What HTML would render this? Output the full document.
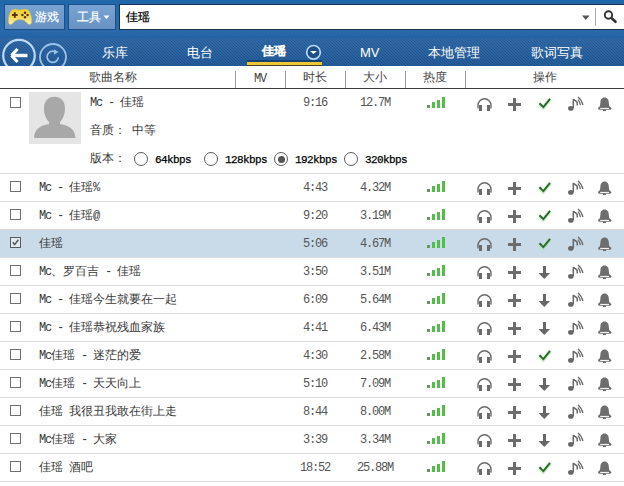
<!DOCTYPE html>
<html><head><meta charset="utf-8">
<style>
*{margin:0;padding:0;box-sizing:border-box}
html,body{width:624px;height:486px;overflow:hidden;background:#fff;font-family:"Liberation Sans",sans-serif;font-size:12px;color:#333}
.abs{position:absolute}
#top{position:absolute;left:0;top:0;width:624px;height:38px;background:linear-gradient(#2068aa,#2a6aac)}
#nav{position:absolute;left:0;top:38px;width:624px;height:28px;background-color:#27619e;
 background-image:repeating-linear-gradient(45deg,rgba(255,255,255,0.06) 0 1px,transparent 1px 3px),repeating-linear-gradient(-45deg,rgba(0,0,0,0.06) 0 1px,transparent 1px 3px)}
.btn{position:absolute;top:4px;height:26px;background:linear-gradient(#78a3d2,#6892c3);border:1px solid #1b4f88}
.navt{position:absolute;top:45px;color:#fff;font-size:13px;line-height:16px;white-space:nowrap}
#hdr{position:absolute;left:0;top:66px;width:624px;height:23px;background:#fff;border-bottom:1px solid #3a3a3a}
.hs{position:absolute;top:71px;width:1px;height:17px;background:#999}
.ht{position:absolute;top:69px;font-size:12px;color:#444;line-height:16px;white-space:nowrap}
.row{position:absolute;left:0;width:624px;height:28px;border-top:1px solid #dcdcdc}
.row.sel{background:#c9dae8}
.cb{position:absolute;left:10px;width:11px;height:11px;border:1px solid #707070;background:#fff}
.cb svg{position:absolute;left:0;top:0}
.m{font-family:"Liberation Mono",monospace;font-size:12px;letter-spacing:-1.2px}
.t{position:absolute;line-height:14px;color:#383838;white-space:nowrap}
.c{text-align:center}
.kb{color:#000;font-size:11px;letter-spacing:-0.6px;margin-top:2px;-webkit-text-stroke:0.25px #000}
.ic{position:absolute;left:0;width:624px;height:28px}
.ic svg{position:absolute}
.radio{position:absolute;width:14px;height:14px;border:1px solid #5c5c5c;border-radius:50%;background:#fff}
.radio.sel::after{content:"";position:absolute;left:2.5px;top:2.5px;width:7px;height:7px;border-radius:50%;background:#555}
#band{position:absolute;left:0;top:30px;width:624px;height:8px;background:linear-gradient(#2a6aac,#2566a8 60%,#2261a3)}
.n{color:#555;margin-top:1px}
.cb.on{background:#e2eaf2;border-color:#5a5a5a}

</style></head><body>
<div id="top"></div>
<div id="band"></div>
<div class="btn" style="left:4px;width:61px"></div>
<div class="btn" style="left:68px;width:48px"></div>
<svg class="abs" style="left:7px;top:8px" width="26" height="18">
 <defs><linearGradient id="gy" x1="0" y1="0" x2="0" y2="1"><stop offset="0" stop-color="#f2cf2a"/><stop offset="0.55" stop-color="#f4dc5a"/><stop offset="1" stop-color="#f8f0b0"/></linearGradient></defs>
 <path d="M6,1.5 C9,0.5 11,2 13,2 C15,2 17,0.5 20,1.5 C23.5,3 25,10 24.5,14.5 C24,17 21.5,17 19.5,14.5 C18,12.5 16.5,11.5 13,11.5 C9.5,11.5 8,12.5 6.5,14.5 C4.5,17 2,17 1.5,14.5 C1,10 2.5,3 6,1.5 Z" fill="url(#gy)" stroke="#d8c050" stroke-width="0.6"/>
 <path d="M5,7 H10.6 M7.8,4.2 V9.8" stroke="#5e3008" stroke-width="1.9"/>
 <circle cx="18" cy="4.8" r="1.2" fill="#5e3008"/><circle cx="20.6" cy="7" r="1.2" fill="#5e3008"/><circle cx="18" cy="9.2" r="1.2" fill="#5e3008"/><circle cx="15.4" cy="7" r="1.2" fill="#5e3008"/>
</svg>
<svg class="abs" style="left:103px;top:15px" width="7" height="5"><path d="M0.5,0.5 H6.5 L3.5,4 Z" fill="#fff"/></svg>
<div class="abs" style="left:119px;top:4px;width:505px;height:26px;background:#fff;border:1px solid #17324e;border-right:none"></div>
<svg class="abs" style="left:582px;top:15px" width="8" height="6"><path d="M0,0.5 H7.5 L3.75,5 Z" fill="#555"/></svg>
<div class="abs" style="left:595px;top:8px;width:1px;height:18px;background:#aaa"></div>
<svg class="abs" style="left:601px;top:8px" width="18" height="18"><circle cx="7.5" cy="7" r="3.7" fill="none" stroke="#333" stroke-width="1.9"/><path d="M10.5,10 L14.5,13.8" stroke="#333" stroke-width="2.6" stroke-linecap="round"/></svg>
<div class="t" style="left:126px;top:9px;font-size:12px;color:#000;line-height:16px;-webkit-text-stroke:0.25px #000">佳瑶</div>
<div class="t" style="left:35px;top:9px;font-size:12px;color:#fff;line-height:16px;-webkit-text-stroke:0.2px #fff">游戏</div>
<div class="t" style="left:77px;top:9px;font-size:12px;color:#fff;line-height:16px;-webkit-text-stroke:0.2px #fff">工具</div>
<svg class="abs" style="left:0;top:38px" width="624" height="28"><defs><pattern id="st" width="3" height="3" patternUnits="userSpaceOnUse"><rect width="3" height="3" fill="#2763a2"/><rect x="0" y="0" width="1" height="1" fill="#1c5390"/><rect x="1" y="1" width="1" height="1" fill="#1c5390"/><rect x="2" y="2" width="1" height="1" fill="#1c5390"/></pattern><linearGradient id="ng" x1="0" y1="0" x2="0" y2="1"><stop offset="0" stop-color="#fff" stop-opacity="0.05"/><stop offset="1" stop-color="#000" stop-opacity="0.05"/></linearGradient></defs><rect width="624" height="28" fill="url(#st)"/><rect width="624" height="28" fill="url(#ng)"/></svg>
<svg class="abs" style="left:0;top:38px" width="70" height="28">
 <circle cx="19" cy="17.6" r="15.8" fill="none" stroke="#bcd9f6" stroke-width="2.2"/>
 <path d="M11.5,17.5 L17.5,11 M11.5,17.5 L17.5,24" stroke="#fff" stroke-width="3.2" stroke-linecap="butt"/>
 <path d="M12.5,17.5 H27.5" stroke="#fff" stroke-width="3.4"/>
 <circle cx="53" cy="19" r="13" fill="none" stroke="#9cc0e6" stroke-width="1.8"/>
 <path d="M54.8,13.6 A5.6,5.6 0 1 0 58.3,19.2" fill="none" stroke="#9cc0e6" stroke-width="1.7"/>
 <path d="M54,11.2 L54,16.8 L58.5,14 Z" fill="#9cc0e6"/>
</svg>
<div class="navt" style="left:102px">乐库</div>
<div class="navt" style="left:187px">电台</div>
<div class="navt" style="left:262px;top:43px;font-size:12px;-webkit-text-stroke:0.8px #fff">佳瑶</div>
<div class="abs" style="left:247px;top:60px;width:75px;height:2px;background:rgba(0,20,50,0.35)"></div><div class="abs" style="left:247px;top:62px;width:75px;height:3px;background:#eec834"></div><div class="abs" style="left:247px;top:65px;width:75px;height:1px;background:#4a4520"></div>
<svg class="abs" style="left:304px;top:43px" width="19" height="19"><circle cx="9.5" cy="9.3" r="6.8" fill="#1d4f85" stroke="#b8d8f8" stroke-width="1.7"/><path d="M6,8 H13 L9.5,11 Z" fill="#fff"/></svg>
<div class="navt" style="left:360px">MV</div>
<div class="navt" style="left:428px">本地管理</div>
<div class="navt" style="left:531px">歌词写真</div>
<div id="hdr"></div>
<div class="hs" style="left:235px"></div>
<div class="hs" style="left:285px"></div>
<div class="hs" style="left:345px"></div>
<div class="hs" style="left:405px"></div>
<div class="hs" style="left:465px"></div>
<div class="ht" style="left:89px">歌曲名称</div>
<div class="ht m" style="left:254px;top:71px">MV</div>
<div class="ht" style="left:303px">时长</div>
<div class="ht" style="left:363px">大小</div>
<div class="ht" style="left:423px">热度</div>
<div class="ht" style="left:533px">操作</div>

<div class="cb" style="top:97px"></div>
<svg style="position:absolute;left:29px;top:92px" width="52" height="52"><rect width="52" height="52" fill="#e5e5e5"/><path d="M25.5,4.8 C31.5,4.8 36,9 36,16 C36,22.5 34,27 31,30 V32 C40,33.5 46,37 46.5,46 H5 C5.5,37 11,33.5 20,32 V30 C17,27 15,22.5 15,16 C15,9 19.5,4.8 25.5,4.8 Z" fill="#a8a8a8"/></svg>
<div class="t" style="left:90px;top:95px"><span class="m">Mc&#160;-&#160;</span>佳瑶</div>
<div class="t m c n" style="left:285px;width:60px;top:95px">9:16</div>
<div class="t m c n" style="left:345px;width:60px;top:95px">12.7M</div>
<div class="ic" style="top:89px"><svg style="left:427px;top:0" width="18" height="28"><rect x="0" y="16" width="3" height="3" fill="#629a5e"/><rect x="5" y="13" width="3" height="6" fill="#52bd4a"/><rect x="10" y="11" width="3" height="8" fill="#52bd4a"/><rect x="15" y="8" width="3" height="11" fill="#52bd4a"/></svg></div><div class="ic" style="top:89px"><svg style="left:476px;top:0" width="18" height="28"><path d="M2,19.5 V16.3 A6.5,6.5 0 0 1 15,16.3 V19.5" fill="none" stroke="#6a6a6a" stroke-width="1.4"/><rect x="3" y="16" width="3" height="6" fill="#6a6a6a"/><rect x="11" y="16" width="3" height="6" fill="#6a6a6a"/></svg></div><div class="ic" style="top:89px"><svg style="left:507px;top:0" width="16" height="28"><rect x="1" y="14" width="13" height="3" fill="#6c6c6c"/><rect x="6" y="9" width="3" height="13" fill="#6c6c6c"/></svg></div><div class="ic" style="top:89px"><svg style="left:537px;top:0" width="16" height="28"><path d="M2.2,14.8 L6.2,18.8 L12.8,10.4" fill="none" stroke="#a6e6a0" stroke-width="4" stroke-opacity="0.55"/><path d="M2.4,14.2 L6.4,18.1 L13.1,9.8" fill="none" stroke="#2f6a2f" stroke-width="2"/></svg></div><div class="ic" style="top:89px"><svg style="left:566px;top:0" width="20" height="28"><ellipse cx="4.8" cy="19.4" rx="2.7" ry="2.4" fill="#666"/><path d="M7.3,19.5 V9.9" fill="none" stroke="#666" stroke-width="1.5"/><path d="M7.4,10.4 Q10,12 11.2,13.2 L11.3,16.5" fill="none" stroke="#666" stroke-width="1.5"/><path d="M11.9,10.6 Q14,12.8 14.4,16.1" fill="none" stroke="#6a6a6a" stroke-width="1.25"/><path d="M12,7.9 Q15.9,11 16.9,16.1" fill="none" stroke="#6a6a6a" stroke-width="1.25"/></svg></div><div class="ic" style="top:89px"><svg style="left:597px;top:0" width="16" height="28"><path d="M7.6,8.6 C4.6,8.6 3.6,11 3.4,13.5 C3.2,16 3,17 2,18.5 H13.2 C12.2,17 12,16 11.8,13.5 C11.6,11 10.6,8.6 7.6,8.6 Z" fill="#6e6e6e"/><rect x="1.1" y="17.8" width="13.1" height="3" rx="1.5" fill="#6e6e6e"/><rect x="3.2" y="18.9" width="8.8" height="1" fill="#fff"/><rect x="6" y="20.5" width="3" height="1.6" fill="#6e6e6e"/></svg></div>
<div class="t" style="left:90px;top:123px">音质：<span class="m">&#160;</span>中等</div>
<div class="t" style="left:90px;top:151px">版本：</div>
<div class="radio" style="left:134px;top:152px"></div>
<div class="t m kb" style="left:155px;top:151px">64kbps</div>
<div class="radio" style="left:204px;top:152px"></div>
<div class="t m kb" style="left:225px;top:151px">128kbps</div>
<div class="radio sel" style="left:274px;top:152px"></div>
<div class="t m kb" style="left:295px;top:151px">192kbps</div>
<div class="radio" style="left:344px;top:152px"></div>
<div class="t m kb" style="left:365px;top:151px">320kbps</div>
<div class="row" style="top:173px"></div>
<div class="cb" style="top:181px"></div>
<div class="t" style="left:39px;top:180px"><span class="m">Mc&#160;-&#160;</span>佳瑶<span class="m">%</span></div>
<div class="t m c n" style="left:285px;width:60px;top:180px">4:43</div>
<div class="t m c n" style="left:345px;width:60px;top:180px">4.32M</div>
<div class="ic" style="top:173px"><svg style="left:427px;top:0" width="18" height="28"><rect x="0" y="16" width="3" height="3" fill="#629a5e"/><rect x="5" y="13" width="3" height="6" fill="#52bd4a"/><rect x="10" y="11" width="3" height="8" fill="#52bd4a"/><rect x="15" y="8" width="3" height="11" fill="#52bd4a"/></svg></div><div class="ic" style="top:173px"><svg style="left:476px;top:0" width="18" height="28"><path d="M2,19.5 V16.3 A6.5,6.5 0 0 1 15,16.3 V19.5" fill="none" stroke="#6a6a6a" stroke-width="1.4"/><rect x="3" y="16" width="3" height="6" fill="#6a6a6a"/><rect x="11" y="16" width="3" height="6" fill="#6a6a6a"/></svg></div><div class="ic" style="top:173px"><svg style="left:507px;top:0" width="16" height="28"><rect x="1" y="14" width="13" height="3" fill="#6c6c6c"/><rect x="6" y="9" width="3" height="13" fill="#6c6c6c"/></svg></div><div class="ic" style="top:173px"><svg style="left:537px;top:0" width="16" height="28"><path d="M2.2,14.8 L6.2,18.8 L12.8,10.4" fill="none" stroke="#a6e6a0" stroke-width="4" stroke-opacity="0.55"/><path d="M2.4,14.2 L6.4,18.1 L13.1,9.8" fill="none" stroke="#2f6a2f" stroke-width="2"/></svg></div><div class="ic" style="top:173px"><svg style="left:566px;top:0" width="20" height="28"><ellipse cx="4.8" cy="19.4" rx="2.7" ry="2.4" fill="#666"/><path d="M7.3,19.5 V9.9" fill="none" stroke="#666" stroke-width="1.5"/><path d="M7.4,10.4 Q10,12 11.2,13.2 L11.3,16.5" fill="none" stroke="#666" stroke-width="1.5"/><path d="M11.9,10.6 Q14,12.8 14.4,16.1" fill="none" stroke="#6a6a6a" stroke-width="1.25"/><path d="M12,7.9 Q15.9,11 16.9,16.1" fill="none" stroke="#6a6a6a" stroke-width="1.25"/></svg></div><div class="ic" style="top:173px"><svg style="left:597px;top:0" width="16" height="28"><path d="M7.6,8.6 C4.6,8.6 3.6,11 3.4,13.5 C3.2,16 3,17 2,18.5 H13.2 C12.2,17 12,16 11.8,13.5 C11.6,11 10.6,8.6 7.6,8.6 Z" fill="#6e6e6e"/><rect x="1.1" y="17.8" width="13.1" height="3" rx="1.5" fill="#6e6e6e"/><rect x="3.2" y="18.9" width="8.8" height="1" fill="#fff"/><rect x="6" y="20.5" width="3" height="1.6" fill="#6e6e6e"/></svg></div>
<div class="row" style="top:201px"></div>
<div class="cb" style="top:209px"></div>
<div class="t" style="left:39px;top:208px"><span class="m">Mc&#160;-&#160;</span>佳瑶<span class="m">@</span></div>
<div class="t m c n" style="left:285px;width:60px;top:208px">9:20</div>
<div class="t m c n" style="left:345px;width:60px;top:208px">3.19M</div>
<div class="ic" style="top:201px"><svg style="left:427px;top:0" width="18" height="28"><rect x="0" y="16" width="3" height="3" fill="#629a5e"/><rect x="5" y="13" width="3" height="6" fill="#52bd4a"/><rect x="10" y="11" width="3" height="8" fill="#52bd4a"/><rect x="15" y="8" width="3" height="11" fill="#52bd4a"/></svg></div><div class="ic" style="top:201px"><svg style="left:476px;top:0" width="18" height="28"><path d="M2,19.5 V16.3 A6.5,6.5 0 0 1 15,16.3 V19.5" fill="none" stroke="#6a6a6a" stroke-width="1.4"/><rect x="3" y="16" width="3" height="6" fill="#6a6a6a"/><rect x="11" y="16" width="3" height="6" fill="#6a6a6a"/></svg></div><div class="ic" style="top:201px"><svg style="left:507px;top:0" width="16" height="28"><rect x="1" y="14" width="13" height="3" fill="#6c6c6c"/><rect x="6" y="9" width="3" height="13" fill="#6c6c6c"/></svg></div><div class="ic" style="top:201px"><svg style="left:537px;top:0" width="16" height="28"><path d="M2.2,14.8 L6.2,18.8 L12.8,10.4" fill="none" stroke="#a6e6a0" stroke-width="4" stroke-opacity="0.55"/><path d="M2.4,14.2 L6.4,18.1 L13.1,9.8" fill="none" stroke="#2f6a2f" stroke-width="2"/></svg></div><div class="ic" style="top:201px"><svg style="left:566px;top:0" width="20" height="28"><ellipse cx="4.8" cy="19.4" rx="2.7" ry="2.4" fill="#666"/><path d="M7.3,19.5 V9.9" fill="none" stroke="#666" stroke-width="1.5"/><path d="M7.4,10.4 Q10,12 11.2,13.2 L11.3,16.5" fill="none" stroke="#666" stroke-width="1.5"/><path d="M11.9,10.6 Q14,12.8 14.4,16.1" fill="none" stroke="#6a6a6a" stroke-width="1.25"/><path d="M12,7.9 Q15.9,11 16.9,16.1" fill="none" stroke="#6a6a6a" stroke-width="1.25"/></svg></div><div class="ic" style="top:201px"><svg style="left:597px;top:0" width="16" height="28"><path d="M7.6,8.6 C4.6,8.6 3.6,11 3.4,13.5 C3.2,16 3,17 2,18.5 H13.2 C12.2,17 12,16 11.8,13.5 C11.6,11 10.6,8.6 7.6,8.6 Z" fill="#6e6e6e"/><rect x="1.1" y="17.8" width="13.1" height="3" rx="1.5" fill="#6e6e6e"/><rect x="3.2" y="18.9" width="8.8" height="1" fill="#fff"/><rect x="6" y="20.5" width="3" height="1.6" fill="#6e6e6e"/></svg></div>
<div class="row sel" style="top:229px"></div>
<div class="cb on" style="top:237px"><svg width="9" height="9"><path d="M1.8,4.3 L3.6,6.6 L7.4,1.8" fill="none" stroke="#555" stroke-width="1.5"/></svg></div>
<div class="t" style="left:39px;top:236px">佳瑶</div>
<div class="t m c n" style="left:285px;width:60px;top:236px">5:06</div>
<div class="t m c n" style="left:345px;width:60px;top:236px">4.67M</div>
<div class="ic" style="top:229px"><svg style="left:427px;top:0" width="18" height="28"><rect x="0" y="16" width="3" height="3" fill="#629a5e"/><rect x="5" y="13" width="3" height="6" fill="#52bd4a"/><rect x="10" y="11" width="3" height="8" fill="#52bd4a"/><rect x="15" y="8" width="3" height="11" fill="#52bd4a"/></svg></div><div class="ic" style="top:229px"><svg style="left:476px;top:0" width="18" height="28"><path d="M2,19.5 V16.3 A6.5,6.5 0 0 1 15,16.3 V19.5" fill="none" stroke="#6a6a6a" stroke-width="1.4"/><rect x="3" y="16" width="3" height="6" fill="#6a6a6a"/><rect x="11" y="16" width="3" height="6" fill="#6a6a6a"/></svg></div><div class="ic" style="top:229px"><svg style="left:507px;top:0" width="16" height="28"><rect x="1" y="14" width="13" height="3" fill="#6c6c6c"/><rect x="6" y="9" width="3" height="13" fill="#6c6c6c"/></svg></div><div class="ic" style="top:229px"><svg style="left:537px;top:0" width="16" height="28"><path d="M2.2,14.8 L6.2,18.8 L12.8,10.4" fill="none" stroke="#a6e6a0" stroke-width="4" stroke-opacity="0.55"/><path d="M2.4,14.2 L6.4,18.1 L13.1,9.8" fill="none" stroke="#2f6a2f" stroke-width="2"/></svg></div><div class="ic" style="top:229px"><svg style="left:566px;top:0" width="20" height="28"><ellipse cx="4.8" cy="19.4" rx="2.7" ry="2.4" fill="#666"/><path d="M7.3,19.5 V9.9" fill="none" stroke="#666" stroke-width="1.5"/><path d="M7.4,10.4 Q10,12 11.2,13.2 L11.3,16.5" fill="none" stroke="#666" stroke-width="1.5"/><path d="M11.9,10.6 Q14,12.8 14.4,16.1" fill="none" stroke="#6a6a6a" stroke-width="1.25"/><path d="M12,7.9 Q15.9,11 16.9,16.1" fill="none" stroke="#6a6a6a" stroke-width="1.25"/></svg></div><div class="ic" style="top:229px"><svg style="left:597px;top:0" width="16" height="28"><path d="M7.6,8.6 C4.6,8.6 3.6,11 3.4,13.5 C3.2,16 3,17 2,18.5 H13.2 C12.2,17 12,16 11.8,13.5 C11.6,11 10.6,8.6 7.6,8.6 Z" fill="#6e6e6e"/><rect x="1.1" y="17.8" width="13.1" height="3" rx="1.5" fill="#6e6e6e"/><rect x="3.2" y="18.9" width="8.8" height="1" fill="#fff"/><rect x="6" y="20.5" width="3" height="1.6" fill="#6e6e6e"/></svg></div>
<div class="row" style="top:257px"></div>
<div class="cb" style="top:265px"></div>
<div class="t" style="left:39px;top:264px"><span class="m">Mc</span>、罗百吉<span class="m">&#160;-&#160;</span>佳瑶</div>
<div class="t m c n" style="left:285px;width:60px;top:264px">3:50</div>
<div class="t m c n" style="left:345px;width:60px;top:264px">3.51M</div>
<div class="ic" style="top:257px"><svg style="left:427px;top:0" width="18" height="28"><rect x="0" y="16" width="3" height="3" fill="#629a5e"/><rect x="5" y="13" width="3" height="6" fill="#52bd4a"/><rect x="10" y="11" width="3" height="8" fill="#52bd4a"/><rect x="15" y="8" width="3" height="11" fill="#52bd4a"/></svg></div><div class="ic" style="top:257px"><svg style="left:476px;top:0" width="18" height="28"><path d="M2,19.5 V16.3 A6.5,6.5 0 0 1 15,16.3 V19.5" fill="none" stroke="#6a6a6a" stroke-width="1.4"/><rect x="3" y="16" width="3" height="6" fill="#6a6a6a"/><rect x="11" y="16" width="3" height="6" fill="#6a6a6a"/></svg></div><div class="ic" style="top:257px"><svg style="left:507px;top:0" width="16" height="28"><rect x="1" y="14" width="13" height="3" fill="#6c6c6c"/><rect x="6" y="9" width="3" height="13" fill="#6c6c6c"/></svg></div><div class="ic" style="top:257px"><svg style="left:538px;top:0" width="14" height="28"><rect x="5" y="9" width="3" height="8" fill="#666"/><path d="M0.5,16 H12 L6.3,22 Z" fill="#666"/></svg></div><div class="ic" style="top:257px"><svg style="left:566px;top:0" width="20" height="28"><ellipse cx="4.8" cy="19.4" rx="2.7" ry="2.4" fill="#666"/><path d="M7.3,19.5 V9.9" fill="none" stroke="#666" stroke-width="1.5"/><path d="M7.4,10.4 Q10,12 11.2,13.2 L11.3,16.5" fill="none" stroke="#666" stroke-width="1.5"/><path d="M11.9,10.6 Q14,12.8 14.4,16.1" fill="none" stroke="#6a6a6a" stroke-width="1.25"/><path d="M12,7.9 Q15.9,11 16.9,16.1" fill="none" stroke="#6a6a6a" stroke-width="1.25"/></svg></div><div class="ic" style="top:257px"><svg style="left:597px;top:0" width="16" height="28"><path d="M7.6,8.6 C4.6,8.6 3.6,11 3.4,13.5 C3.2,16 3,17 2,18.5 H13.2 C12.2,17 12,16 11.8,13.5 C11.6,11 10.6,8.6 7.6,8.6 Z" fill="#6e6e6e"/><rect x="1.1" y="17.8" width="13.1" height="3" rx="1.5" fill="#6e6e6e"/><rect x="3.2" y="18.9" width="8.8" height="1" fill="#fff"/><rect x="6" y="20.5" width="3" height="1.6" fill="#6e6e6e"/></svg></div>
<div class="row" style="top:285px"></div>
<div class="cb" style="top:293px"></div>
<div class="t" style="left:39px;top:292px"><span class="m">Mc&#160;-&#160;</span>佳瑶今生就要在一起</div>
<div class="t m c n" style="left:285px;width:60px;top:292px">6:09</div>
<div class="t m c n" style="left:345px;width:60px;top:292px">5.64M</div>
<div class="ic" style="top:285px"><svg style="left:427px;top:0" width="18" height="28"><rect x="0" y="16" width="3" height="3" fill="#629a5e"/><rect x="5" y="13" width="3" height="6" fill="#52bd4a"/><rect x="10" y="11" width="3" height="8" fill="#52bd4a"/><rect x="15" y="8" width="3" height="11" fill="#52bd4a"/></svg></div><div class="ic" style="top:285px"><svg style="left:476px;top:0" width="18" height="28"><path d="M2,19.5 V16.3 A6.5,6.5 0 0 1 15,16.3 V19.5" fill="none" stroke="#6a6a6a" stroke-width="1.4"/><rect x="3" y="16" width="3" height="6" fill="#6a6a6a"/><rect x="11" y="16" width="3" height="6" fill="#6a6a6a"/></svg></div><div class="ic" style="top:285px"><svg style="left:507px;top:0" width="16" height="28"><rect x="1" y="14" width="13" height="3" fill="#6c6c6c"/><rect x="6" y="9" width="3" height="13" fill="#6c6c6c"/></svg></div><div class="ic" style="top:285px"><svg style="left:538px;top:0" width="14" height="28"><rect x="5" y="9" width="3" height="8" fill="#666"/><path d="M0.5,16 H12 L6.3,22 Z" fill="#666"/></svg></div><div class="ic" style="top:285px"><svg style="left:566px;top:0" width="20" height="28"><ellipse cx="4.8" cy="19.4" rx="2.7" ry="2.4" fill="#666"/><path d="M7.3,19.5 V9.9" fill="none" stroke="#666" stroke-width="1.5"/><path d="M7.4,10.4 Q10,12 11.2,13.2 L11.3,16.5" fill="none" stroke="#666" stroke-width="1.5"/><path d="M11.9,10.6 Q14,12.8 14.4,16.1" fill="none" stroke="#6a6a6a" stroke-width="1.25"/><path d="M12,7.9 Q15.9,11 16.9,16.1" fill="none" stroke="#6a6a6a" stroke-width="1.25"/></svg></div><div class="ic" style="top:285px"><svg style="left:597px;top:0" width="16" height="28"><path d="M7.6,8.6 C4.6,8.6 3.6,11 3.4,13.5 C3.2,16 3,17 2,18.5 H13.2 C12.2,17 12,16 11.8,13.5 C11.6,11 10.6,8.6 7.6,8.6 Z" fill="#6e6e6e"/><rect x="1.1" y="17.8" width="13.1" height="3" rx="1.5" fill="#6e6e6e"/><rect x="3.2" y="18.9" width="8.8" height="1" fill="#fff"/><rect x="6" y="20.5" width="3" height="1.6" fill="#6e6e6e"/></svg></div>
<div class="row" style="top:313px"></div>
<div class="cb" style="top:321px"></div>
<div class="t" style="left:39px;top:320px"><span class="m">Mc&#160;-&#160;</span>佳瑶恭祝残血家族</div>
<div class="t m c n" style="left:285px;width:60px;top:320px">4:41</div>
<div class="t m c n" style="left:345px;width:60px;top:320px">6.43M</div>
<div class="ic" style="top:313px"><svg style="left:427px;top:0" width="18" height="28"><rect x="0" y="16" width="3" height="3" fill="#629a5e"/><rect x="5" y="13" width="3" height="6" fill="#52bd4a"/><rect x="10" y="11" width="3" height="8" fill="#52bd4a"/><rect x="15" y="8" width="3" height="11" fill="#52bd4a"/></svg></div><div class="ic" style="top:313px"><svg style="left:476px;top:0" width="18" height="28"><path d="M2,19.5 V16.3 A6.5,6.5 0 0 1 15,16.3 V19.5" fill="none" stroke="#6a6a6a" stroke-width="1.4"/><rect x="3" y="16" width="3" height="6" fill="#6a6a6a"/><rect x="11" y="16" width="3" height="6" fill="#6a6a6a"/></svg></div><div class="ic" style="top:313px"><svg style="left:507px;top:0" width="16" height="28"><rect x="1" y="14" width="13" height="3" fill="#6c6c6c"/><rect x="6" y="9" width="3" height="13" fill="#6c6c6c"/></svg></div><div class="ic" style="top:313px"><svg style="left:538px;top:0" width="14" height="28"><rect x="5" y="9" width="3" height="8" fill="#666"/><path d="M0.5,16 H12 L6.3,22 Z" fill="#666"/></svg></div><div class="ic" style="top:313px"><svg style="left:566px;top:0" width="20" height="28"><ellipse cx="4.8" cy="19.4" rx="2.7" ry="2.4" fill="#666"/><path d="M7.3,19.5 V9.9" fill="none" stroke="#666" stroke-width="1.5"/><path d="M7.4,10.4 Q10,12 11.2,13.2 L11.3,16.5" fill="none" stroke="#666" stroke-width="1.5"/><path d="M11.9,10.6 Q14,12.8 14.4,16.1" fill="none" stroke="#6a6a6a" stroke-width="1.25"/><path d="M12,7.9 Q15.9,11 16.9,16.1" fill="none" stroke="#6a6a6a" stroke-width="1.25"/></svg></div><div class="ic" style="top:313px"><svg style="left:597px;top:0" width="16" height="28"><path d="M7.6,8.6 C4.6,8.6 3.6,11 3.4,13.5 C3.2,16 3,17 2,18.5 H13.2 C12.2,17 12,16 11.8,13.5 C11.6,11 10.6,8.6 7.6,8.6 Z" fill="#6e6e6e"/><rect x="1.1" y="17.8" width="13.1" height="3" rx="1.5" fill="#6e6e6e"/><rect x="3.2" y="18.9" width="8.8" height="1" fill="#fff"/><rect x="6" y="20.5" width="3" height="1.6" fill="#6e6e6e"/></svg></div>
<div class="row" style="top:341px"></div>
<div class="cb" style="top:349px"></div>
<div class="t" style="left:39px;top:348px"><span class="m">Mc</span>佳瑶<span class="m">&#160;-&#160;</span>迷茫的爱</div>
<div class="t m c n" style="left:285px;width:60px;top:348px">4:30</div>
<div class="t m c n" style="left:345px;width:60px;top:348px">2.58M</div>
<div class="ic" style="top:341px"><svg style="left:427px;top:0" width="18" height="28"><rect x="0" y="16" width="3" height="3" fill="#629a5e"/><rect x="5" y="13" width="3" height="6" fill="#52bd4a"/><rect x="10" y="11" width="3" height="8" fill="#52bd4a"/><rect x="15" y="8" width="3" height="11" fill="#52bd4a"/></svg></div><div class="ic" style="top:341px"><svg style="left:476px;top:0" width="18" height="28"><path d="M2,19.5 V16.3 A6.5,6.5 0 0 1 15,16.3 V19.5" fill="none" stroke="#6a6a6a" stroke-width="1.4"/><rect x="3" y="16" width="3" height="6" fill="#6a6a6a"/><rect x="11" y="16" width="3" height="6" fill="#6a6a6a"/></svg></div><div class="ic" style="top:341px"><svg style="left:507px;top:0" width="16" height="28"><rect x="1" y="14" width="13" height="3" fill="#6c6c6c"/><rect x="6" y="9" width="3" height="13" fill="#6c6c6c"/></svg></div><div class="ic" style="top:341px"><svg style="left:537px;top:0" width="16" height="28"><path d="M2.2,14.8 L6.2,18.8 L12.8,10.4" fill="none" stroke="#a6e6a0" stroke-width="4" stroke-opacity="0.55"/><path d="M2.4,14.2 L6.4,18.1 L13.1,9.8" fill="none" stroke="#2f6a2f" stroke-width="2"/></svg></div><div class="ic" style="top:341px"><svg style="left:566px;top:0" width="20" height="28"><ellipse cx="4.8" cy="19.4" rx="2.7" ry="2.4" fill="#666"/><path d="M7.3,19.5 V9.9" fill="none" stroke="#666" stroke-width="1.5"/><path d="M7.4,10.4 Q10,12 11.2,13.2 L11.3,16.5" fill="none" stroke="#666" stroke-width="1.5"/><path d="M11.9,10.6 Q14,12.8 14.4,16.1" fill="none" stroke="#6a6a6a" stroke-width="1.25"/><path d="M12,7.9 Q15.9,11 16.9,16.1" fill="none" stroke="#6a6a6a" stroke-width="1.25"/></svg></div><div class="ic" style="top:341px"><svg style="left:597px;top:0" width="16" height="28"><path d="M7.6,8.6 C4.6,8.6 3.6,11 3.4,13.5 C3.2,16 3,17 2,18.5 H13.2 C12.2,17 12,16 11.8,13.5 C11.6,11 10.6,8.6 7.6,8.6 Z" fill="#6e6e6e"/><rect x="1.1" y="17.8" width="13.1" height="3" rx="1.5" fill="#6e6e6e"/><rect x="3.2" y="18.9" width="8.8" height="1" fill="#fff"/><rect x="6" y="20.5" width="3" height="1.6" fill="#6e6e6e"/></svg></div>
<div class="row" style="top:369px"></div>
<div class="cb" style="top:377px"></div>
<div class="t" style="left:39px;top:376px"><span class="m">Mc</span>佳瑶<span class="m">&#160;-&#160;</span>天天向上</div>
<div class="t m c n" style="left:285px;width:60px;top:376px">5:10</div>
<div class="t m c n" style="left:345px;width:60px;top:376px">7.09M</div>
<div class="ic" style="top:369px"><svg style="left:427px;top:0" width="18" height="28"><rect x="0" y="16" width="3" height="3" fill="#629a5e"/><rect x="5" y="13" width="3" height="6" fill="#52bd4a"/><rect x="10" y="11" width="3" height="8" fill="#52bd4a"/><rect x="15" y="8" width="3" height="11" fill="#52bd4a"/></svg></div><div class="ic" style="top:369px"><svg style="left:476px;top:0" width="18" height="28"><path d="M2,19.5 V16.3 A6.5,6.5 0 0 1 15,16.3 V19.5" fill="none" stroke="#6a6a6a" stroke-width="1.4"/><rect x="3" y="16" width="3" height="6" fill="#6a6a6a"/><rect x="11" y="16" width="3" height="6" fill="#6a6a6a"/></svg></div><div class="ic" style="top:369px"><svg style="left:507px;top:0" width="16" height="28"><rect x="1" y="14" width="13" height="3" fill="#6c6c6c"/><rect x="6" y="9" width="3" height="13" fill="#6c6c6c"/></svg></div><div class="ic" style="top:369px"><svg style="left:538px;top:0" width="14" height="28"><rect x="5" y="9" width="3" height="8" fill="#666"/><path d="M0.5,16 H12 L6.3,22 Z" fill="#666"/></svg></div><div class="ic" style="top:369px"><svg style="left:566px;top:0" width="20" height="28"><ellipse cx="4.8" cy="19.4" rx="2.7" ry="2.4" fill="#666"/><path d="M7.3,19.5 V9.9" fill="none" stroke="#666" stroke-width="1.5"/><path d="M7.4,10.4 Q10,12 11.2,13.2 L11.3,16.5" fill="none" stroke="#666" stroke-width="1.5"/><path d="M11.9,10.6 Q14,12.8 14.4,16.1" fill="none" stroke="#6a6a6a" stroke-width="1.25"/><path d="M12,7.9 Q15.9,11 16.9,16.1" fill="none" stroke="#6a6a6a" stroke-width="1.25"/></svg></div><div class="ic" style="top:369px"><svg style="left:597px;top:0" width="16" height="28"><path d="M7.6,8.6 C4.6,8.6 3.6,11 3.4,13.5 C3.2,16 3,17 2,18.5 H13.2 C12.2,17 12,16 11.8,13.5 C11.6,11 10.6,8.6 7.6,8.6 Z" fill="#6e6e6e"/><rect x="1.1" y="17.8" width="13.1" height="3" rx="1.5" fill="#6e6e6e"/><rect x="3.2" y="18.9" width="8.8" height="1" fill="#fff"/><rect x="6" y="20.5" width="3" height="1.6" fill="#6e6e6e"/></svg></div>
<div class="row" style="top:397px"></div>
<div class="cb" style="top:405px"></div>
<div class="t" style="left:39px;top:404px">佳瑶<span class="m">&#160;</span>我很丑我敢在街上走</div>
<div class="t m c n" style="left:285px;width:60px;top:404px">8:44</div>
<div class="t m c n" style="left:345px;width:60px;top:404px">8.00M</div>
<div class="ic" style="top:397px"><svg style="left:427px;top:0" width="18" height="28"><rect x="0" y="16" width="3" height="3" fill="#629a5e"/><rect x="5" y="13" width="3" height="6" fill="#52bd4a"/><rect x="10" y="11" width="3" height="8" fill="#52bd4a"/><rect x="15" y="8" width="3" height="11" fill="#52bd4a"/></svg></div><div class="ic" style="top:397px"><svg style="left:476px;top:0" width="18" height="28"><path d="M2,19.5 V16.3 A6.5,6.5 0 0 1 15,16.3 V19.5" fill="none" stroke="#6a6a6a" stroke-width="1.4"/><rect x="3" y="16" width="3" height="6" fill="#6a6a6a"/><rect x="11" y="16" width="3" height="6" fill="#6a6a6a"/></svg></div><div class="ic" style="top:397px"><svg style="left:507px;top:0" width="16" height="28"><rect x="1" y="14" width="13" height="3" fill="#6c6c6c"/><rect x="6" y="9" width="3" height="13" fill="#6c6c6c"/></svg></div><div class="ic" style="top:397px"><svg style="left:538px;top:0" width="14" height="28"><rect x="5" y="9" width="3" height="8" fill="#666"/><path d="M0.5,16 H12 L6.3,22 Z" fill="#666"/></svg></div><div class="ic" style="top:397px"><svg style="left:566px;top:0" width="20" height="28"><ellipse cx="4.8" cy="19.4" rx="2.7" ry="2.4" fill="#666"/><path d="M7.3,19.5 V9.9" fill="none" stroke="#666" stroke-width="1.5"/><path d="M7.4,10.4 Q10,12 11.2,13.2 L11.3,16.5" fill="none" stroke="#666" stroke-width="1.5"/><path d="M11.9,10.6 Q14,12.8 14.4,16.1" fill="none" stroke="#6a6a6a" stroke-width="1.25"/><path d="M12,7.9 Q15.9,11 16.9,16.1" fill="none" stroke="#6a6a6a" stroke-width="1.25"/></svg></div><div class="ic" style="top:397px"><svg style="left:597px;top:0" width="16" height="28"><path d="M7.6,8.6 C4.6,8.6 3.6,11 3.4,13.5 C3.2,16 3,17 2,18.5 H13.2 C12.2,17 12,16 11.8,13.5 C11.6,11 10.6,8.6 7.6,8.6 Z" fill="#6e6e6e"/><rect x="1.1" y="17.8" width="13.1" height="3" rx="1.5" fill="#6e6e6e"/><rect x="3.2" y="18.9" width="8.8" height="1" fill="#fff"/><rect x="6" y="20.5" width="3" height="1.6" fill="#6e6e6e"/></svg></div>
<div class="row" style="top:425px"></div>
<div class="cb" style="top:433px"></div>
<div class="t" style="left:39px;top:432px"><span class="m">Mc</span>佳瑶<span class="m">&#160;-&#160;</span>大家</div>
<div class="t m c n" style="left:285px;width:60px;top:432px">3:39</div>
<div class="t m c n" style="left:345px;width:60px;top:432px">3.34M</div>
<div class="ic" style="top:425px"><svg style="left:427px;top:0" width="18" height="28"><rect x="0" y="16" width="3" height="3" fill="#629a5e"/><rect x="5" y="13" width="3" height="6" fill="#52bd4a"/><rect x="10" y="11" width="3" height="8" fill="#52bd4a"/><rect x="15" y="8" width="3" height="11" fill="#52bd4a"/></svg></div><div class="ic" style="top:425px"><svg style="left:476px;top:0" width="18" height="28"><path d="M2,19.5 V16.3 A6.5,6.5 0 0 1 15,16.3 V19.5" fill="none" stroke="#6a6a6a" stroke-width="1.4"/><rect x="3" y="16" width="3" height="6" fill="#6a6a6a"/><rect x="11" y="16" width="3" height="6" fill="#6a6a6a"/></svg></div><div class="ic" style="top:425px"><svg style="left:507px;top:0" width="16" height="28"><rect x="1" y="14" width="13" height="3" fill="#6c6c6c"/><rect x="6" y="9" width="3" height="13" fill="#6c6c6c"/></svg></div><div class="ic" style="top:425px"><svg style="left:538px;top:0" width="14" height="28"><rect x="5" y="9" width="3" height="8" fill="#666"/><path d="M0.5,16 H12 L6.3,22 Z" fill="#666"/></svg></div><div class="ic" style="top:425px"><svg style="left:566px;top:0" width="20" height="28"><ellipse cx="4.8" cy="19.4" rx="2.7" ry="2.4" fill="#666"/><path d="M7.3,19.5 V9.9" fill="none" stroke="#666" stroke-width="1.5"/><path d="M7.4,10.4 Q10,12 11.2,13.2 L11.3,16.5" fill="none" stroke="#666" stroke-width="1.5"/><path d="M11.9,10.6 Q14,12.8 14.4,16.1" fill="none" stroke="#6a6a6a" stroke-width="1.25"/><path d="M12,7.9 Q15.9,11 16.9,16.1" fill="none" stroke="#6a6a6a" stroke-width="1.25"/></svg></div><div class="ic" style="top:425px"><svg style="left:597px;top:0" width="16" height="28"><path d="M7.6,8.6 C4.6,8.6 3.6,11 3.4,13.5 C3.2,16 3,17 2,18.5 H13.2 C12.2,17 12,16 11.8,13.5 C11.6,11 10.6,8.6 7.6,8.6 Z" fill="#6e6e6e"/><rect x="1.1" y="17.8" width="13.1" height="3" rx="1.5" fill="#6e6e6e"/><rect x="3.2" y="18.9" width="8.8" height="1" fill="#fff"/><rect x="6" y="20.5" width="3" height="1.6" fill="#6e6e6e"/></svg></div>
<div class="row" style="top:453px"></div>
<div class="cb" style="top:461px"></div>
<div class="t" style="left:39px;top:460px">佳瑶<span class="m">&#160;</span>酒吧</div>
<div class="t m c n" style="left:285px;width:60px;top:460px">18:52</div>
<div class="t m c n" style="left:345px;width:60px;top:460px">25.88M</div>
<div class="ic" style="top:453px"><svg style="left:427px;top:0" width="18" height="28"><rect x="0" y="16" width="3" height="3" fill="#629a5e"/><rect x="5" y="13" width="3" height="6" fill="#52bd4a"/><rect x="10" y="11" width="3" height="8" fill="#52bd4a"/><rect x="15" y="8" width="3" height="11" fill="#52bd4a"/></svg></div><div class="ic" style="top:453px"><svg style="left:476px;top:0" width="18" height="28"><path d="M2,19.5 V16.3 A6.5,6.5 0 0 1 15,16.3 V19.5" fill="none" stroke="#6a6a6a" stroke-width="1.4"/><rect x="3" y="16" width="3" height="6" fill="#6a6a6a"/><rect x="11" y="16" width="3" height="6" fill="#6a6a6a"/></svg></div><div class="ic" style="top:453px"><svg style="left:507px;top:0" width="16" height="28"><rect x="1" y="14" width="13" height="3" fill="#6c6c6c"/><rect x="6" y="9" width="3" height="13" fill="#6c6c6c"/></svg></div><div class="ic" style="top:453px"><svg style="left:537px;top:0" width="16" height="28"><path d="M2.2,14.8 L6.2,18.8 L12.8,10.4" fill="none" stroke="#a6e6a0" stroke-width="4" stroke-opacity="0.55"/><path d="M2.4,14.2 L6.4,18.1 L13.1,9.8" fill="none" stroke="#2f6a2f" stroke-width="2"/></svg></div><div class="ic" style="top:453px"><svg style="left:566px;top:0" width="20" height="28"><ellipse cx="4.8" cy="19.4" rx="2.7" ry="2.4" fill="#666"/><path d="M7.3,19.5 V9.9" fill="none" stroke="#666" stroke-width="1.5"/><path d="M7.4,10.4 Q10,12 11.2,13.2 L11.3,16.5" fill="none" stroke="#666" stroke-width="1.5"/><path d="M11.9,10.6 Q14,12.8 14.4,16.1" fill="none" stroke="#6a6a6a" stroke-width="1.25"/><path d="M12,7.9 Q15.9,11 16.9,16.1" fill="none" stroke="#6a6a6a" stroke-width="1.25"/></svg></div><div class="ic" style="top:453px"><svg style="left:597px;top:0" width="16" height="28"><path d="M7.6,8.6 C4.6,8.6 3.6,11 3.4,13.5 C3.2,16 3,17 2,18.5 H13.2 C12.2,17 12,16 11.8,13.5 C11.6,11 10.6,8.6 7.6,8.6 Z" fill="#6e6e6e"/><rect x="1.1" y="17.8" width="13.1" height="3" rx="1.5" fill="#6e6e6e"/><rect x="3.2" y="18.9" width="8.8" height="1" fill="#fff"/><rect x="6" y="20.5" width="3" height="1.6" fill="#6e6e6e"/></svg></div>
<div class="row" style="top:481px;height:5px"></div>
</body></html>
